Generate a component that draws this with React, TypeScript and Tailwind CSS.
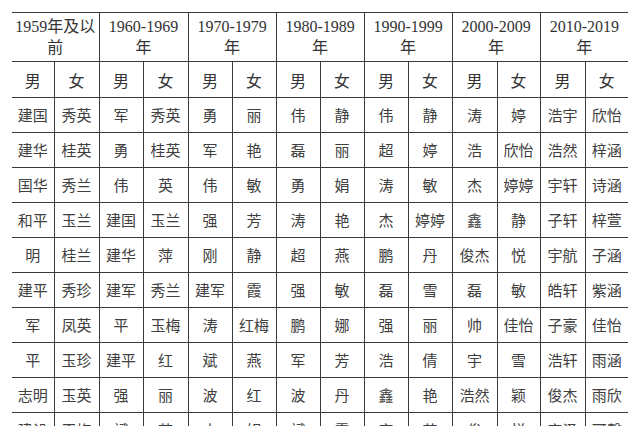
import React from "react";

const decades = [
  ["1959年及以", "前"],
  ["1960-1969", "年"],
  ["1970-1979", "年"],
  ["1980-1989", "年"],
  ["1990-1999", "年"],
  ["2000-2009", "年"],
  ["2010-2019", "年"],
];

const widths = [42, 45, 44, 45, 44, 44, 44, 44, 44, 44, 45, 43, 45, 43];

const rows: string[][] = [
  ["建国", "秀英", "军", "秀英", "勇", "丽", "伟", "静", "伟", "静", "涛", "婷", "浩宇", "欣怡"],
  ["建华", "桂英", "勇", "桂英", "军", "艳", "磊", "丽", "超", "婷", "浩", "欣怡", "浩然", "梓涵"],
  ["国华", "秀兰", "伟", "英", "伟", "敏", "勇", "娟", "涛", "敏", "杰", "婷婷", "宇轩", "诗涵"],
  ["和平", "玉兰", "建国", "玉兰", "强", "芳", "涛", "艳", "杰", "婷婷", "鑫", "静", "子轩", "梓萱"],
  ["明", "桂兰", "建华", "萍", "刚", "静", "超", "燕", "鹏", "丹", "俊杰", "悦", "宇航", "子涵"],
  ["建平", "秀珍", "建军", "秀兰", "建军", "霞", "强", "敏", "磊", "雪", "磊", "敏", "皓轩", "紫涵"],
  ["军", "凤英", "平", "玉梅", "涛", "红梅", "鹏", "娜", "强", "丽", "帅", "佳怡", "子豪", "佳怡"],
  ["平", "玉珍", "建平", "红", "斌", "燕", "军", "芳", "浩", "倩", "宇", "雪", "浩轩", "雨涵"],
  ["志明", "玉英", "强", "丽", "波", "红", "波", "丹", "鑫", "艳", "浩然", "颖", "俊杰", "雨欣"],
  ["建设", "玉梅", "斌", "萍", "杰", "娟", "斌", "霞", "宇", "芳", "俊", "悦", "宇泽", "可馨"],
];

export default function App() {
  return (
    <div className="w-[640px] h-[426px] overflow-hidden bg-white pt-[12px] pl-[12px] text-[#333]">
      <table className="table-fixed border-collapse w-[616px] font-['Noto_Sans_CJK_SC',sans-serif]">
        <colgroup>
          {widths.map((w, i) => (
            <col key={i} style={{ width: w }} />
          ))}
        </colgroup>
        <thead>
          <tr className="h-[49px]">
            {decades.map((d, i) => (
              <th
                key={i}
                colSpan={2}
                className={`border-t border-b border-[#3a3a3a] p-0 text-center align-middle font-normal text-[16px] leading-[21px] font-['Liberation_Serif','Noto_Sans_CJK_SC',serif] ${
                  i > 0 ? "border-l" : ""
                }`}
              >
                <div>{d[0]}</div>
                <div>{d[1]}</div>
              </th>
            ))}
          </tr>
          <tr className="h-[36px]">
            {widths.map((_, i) => (
              <th
                key={i}
                className={`border-b border-[#3a3a3a] p-0 text-center align-middle font-normal text-[16px] ${
                  i > 0 ? "border-l" : ""
                }`}
              >
                {i % 2 === 0 ? "男" : "女"}
              </th>
            ))}
          </tr>
        </thead>
        <tbody>
          {rows.map((r, ri) => (
            <tr key={ri} className="h-[35px]">
              {r.map((name, ci) => (
                <td
                  key={ci}
                  className={`border-b border-[#3a3a3a] p-0 text-center align-middle text-[15px] text-[#404040] ${
                    ci > 0 ? "border-l" : ""
                  }`}
                >
                  {name}
                </td>
              ))}
            </tr>
          ))}
        </tbody>
      </table>
    </div>
  );
}
